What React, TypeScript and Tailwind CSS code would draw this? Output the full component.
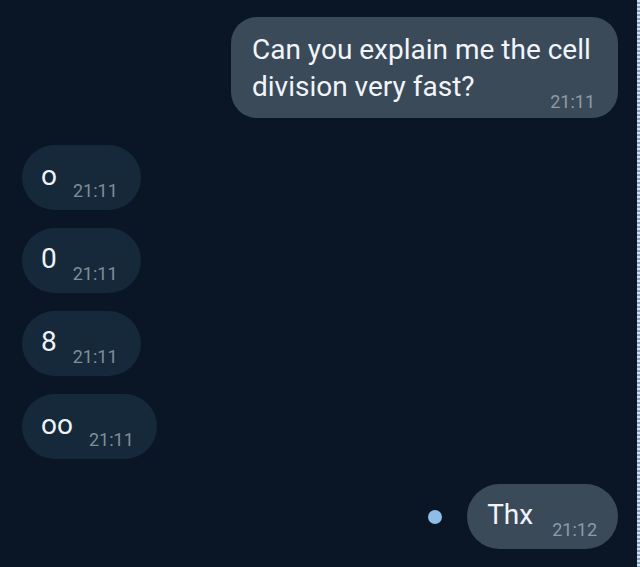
import React from "react";

const font = { fontFamily: "Roboto, 'Noto Sans', sans-serif" };

function Received({ text }: { text: string }) {
  return (
    <div className="flex h-[65px] w-fit items-end rounded-full bg-[#16293a] pb-[10px] pl-[19px] pr-[23px]">
      <span className="mb-[6px] text-[28px] leading-[37px] text-[#eef3f8]">{text}</span>
      <span className="ml-[16px] text-[18px] leading-[18px] text-[#7f8d9b]">21:11</span>
    </div>
  );
}

export default function App() {
  return (
    <div className="flex h-[567px] w-[640px] overflow-hidden bg-[#0a1526]" style={font}>
      <div className="flex flex-1 flex-col pt-[17px]">
        <div className="flex justify-end pr-[19px]">
          <div className="w-[387px] rounded-[26px] bg-[#3a4a59] pb-[7px] pl-[21px] pr-[23px] pt-[14px]">
            <div className="whitespace-nowrap text-[28px] leading-[37px] text-[#f1f5f9]">
              Can you explain me the cell
            </div>
            <div className="flex items-end justify-between">
              <span className="mb-[6px] whitespace-nowrap text-[28px] leading-[37px] text-[#f1f5f9]">
                division very fast?
              </span>
              <span className="text-[18px] leading-[18px] text-[#8e9ba7]">21:11</span>
            </div>
          </div>
        </div>

        <div className="mt-[27px] flex flex-col gap-[18px] pl-[22px]">
          <Received text="o" />
          <Received text="0" />
          <Received text="8" />
          <Received text="oo" />
        </div>

        <div className="mt-[25px] flex items-center justify-end pr-[19px]">
          <div className="mr-[25px] h-[14px] w-[14px] rounded-full bg-[#8fbde6]" />
          <div className="flex h-[65px] items-end rounded-full bg-[#3a4a59] pb-[10px] pl-[20px] pr-[21px]">
            <span className="mb-[6px] text-[28px] leading-[37px] text-[#f1f5f9]">Thx</span>
            <span className="ml-[19px] text-[18px] leading-[18px] text-[#8e9ba7]">21:12</span>
          </div>
        </div>
      </div>
      <div className="w-[3px] bg-[repeating-linear-gradient(180deg,#d3e3f2_0px,#d3e3f2_2px,#86a3c2_2px,#86a3c2_4px)]" />
    </div>
  );
}
